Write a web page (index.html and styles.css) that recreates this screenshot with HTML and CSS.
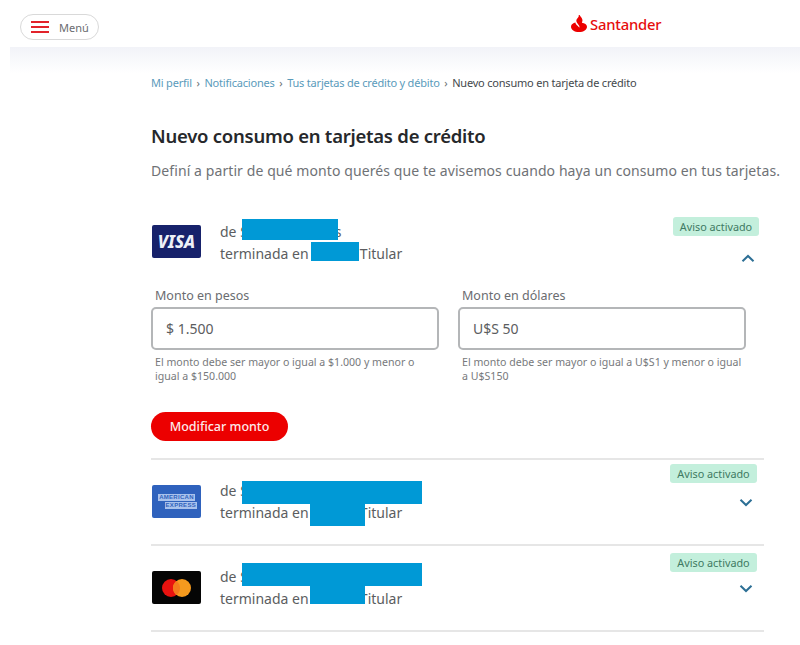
FILE: index.html
```html
<!DOCTYPE html>
<html lang="es">
<head>
    <meta charset="UTF-8">
    <meta name="viewport" content="width=device-width, initial-scale=1.0">
    <title>Santander - Nuevo consumo en tarjetas de crédito</title>
    <link rel="stylesheet" href="styles.css">
</head>
<body>
    <header class="topbar">
        <button class="menu-btn" type="button">
            <span class="menu-icon"><i></i><i></i><i></i></span>
            <span>Menú</span>
        </button>
        <div class="logo">
            <svg class="logo-flame" width="16" height="17" viewBox="0 0 16 17">
                <path fill="#ec0000" d="M8.600 0c.9 1.600 2.500 2.900 2.800 4.800 .2 1.200-.2 2.100-.5 2.900 2.800 .5 5.100 1.800 5.100 4 0 2.900-3.400 5.300-8 5.300s-8-2.400-8-5.300c0-2.200 2.200-3.500 4.500-4.100-.1 1 .6 1.900 1.400 2.700 .9 .8 1.900 1.500 2.400 2.500 .6-1.500-.4-2.700-1.400-3.900-1-1.100-1.900-2.200-1.500-3.800 .3-1.100 1.400-2 2-3 .4-.7 .6-1.300 .2-2.100z"/>
            </svg>
            <span>Santander</span>
        </div>
    </header>
    <div class="band"></div>

    <main class="content">
        <nav class="crumbs">
            <a>Mi perfil</a> <b>›</b> <a>Notificaciones</a> <b>›</b> <a>Tus tarjetas de crédito y débito</a> <b>›</b> <span>Nuevo consumo en tarjeta de crédito</span>
        </nav>

        <h1>Nuevo consumo en tarjetas de crédito</h1>
        <p class="intro">Definí a partir de qué monto querés que te avisemos cuando haya un consumo en tus tarjetas.</p>

        <section class="card-row card-open">
            <div class="card-head">
                <div class="brand brand-visa">VISA</div>
                <div class="card-info">
                    <div>de S<span class="holder"></span>s</div>
                    <div>terminada en <span class="digits"></span> Titular</div>
                    <span class="redact redact-visa-a"></span>
                    <span class="redact redact-visa-b"></span>
                </div>
                <div class="card-status">
                    <span class="badge">Aviso activado</span>
                    <svg class="chevron" width="14" height="9" viewBox="0 0 14 9"><path d="M1.500 7.300 7 2l5.500 5.300"/></svg>
                </div>
            </div>

            <div class="fields">
                <div class="field">
                    <label for="pesos">Monto en pesos</label>
                    <input id="pesos" type="text" value="$ 1.500">
                    <p>El monto debe ser mayor o igual a $1.000 y menor o igual a $150.000</p>
                </div>
                <div class="field">
                    <label for="dolares">Monto en dólares</label>
                    <input id="dolares" type="text" value="U$S 50">
                    <p>El monto debe ser mayor o igual a U$S1 y menor o igual a U$S150</p>
                </div>
            </div>

            <button class="primary" type="button">Modificar monto</button>
        </section>

        <section class="card-row">
            <div class="card-head">
                <div class="brand brand-amex"><span>AMERICAN</span><span>EXPRESS</span></div>
                <div class="card-info">
                    <div>de S</div>
                    <div>terminada en <span class="digits"></span> Titular</div>
                    <span class="redact redact-amex-a"></span>
                    <span class="redact redact-amex-b"></span>
                </div>
                <div class="card-status">
                    <span class="badge">Aviso activado</span>
                    <svg class="chevron" width="14" height="9" viewBox="0 0 14 9"><path d="M1.500 1.700 7 7l5.500-5.300"/></svg>
                </div>
            </div>
        </section>

        <section class="card-row card-last">
            <div class="card-head">
                <div class="brand brand-mc">
                    <svg width="29" height="18" viewBox="0 0 29 18">
                        <circle cx="9" cy="9" r="9" fill="#e8120f"/>
                        <circle cx="20" cy="9" r="9" fill="#f59a1e"/>
                        <path fill="#f47a1c" d="M14.500 1.880A9 9 0 0 1 14.500 16.120 9 9 0 0 1 14.500 1.880z"/>
                    </svg>
                </div>
                <div class="card-info">
                    <div>de S</div>
                    <div>terminada en <span class="digits"></span> Titular</div>
                    <span class="redact redact-mc-a"></span>
                    <span class="redact redact-mc-b"></span>
                </div>
                <div class="card-status">
                    <span class="badge">Aviso activado</span>
                    <svg class="chevron" width="14" height="9" viewBox="0 0 14 9"><path d="M1.500 1.700 7 7l5.500-5.300"/></svg>
                </div>
            </div>
        </section>
    </main>
</body>
</html>
```

FILE: styles.css
```css
* {
    margin: 0;
    padding: 0;
    box-sizing: border-box;
}

body {
    font-family: "Noto Sans", "Open Sans", sans-serif;
    background: #fff;
    color: #5f6266;
    overflow: hidden;
}

.topbar {
    height: 47px;
    padding: 14px 0 0 20px;
    display: flex;
    align-items: flex-start;
}

.menu-btn {
    width: 79px;
    height: 26px;
    display: flex;
    align-items: center;
    gap: 10px;
    padding-left: 10px;
    background: #fff;
    border: 1px solid #d9d9d9;
    border-radius: 13px;
    font-family: inherit;
    font-size: 11px;
    color: #6a6c70;
}

.menu-icon {
    display: flex;
    flex-direction: column;
    gap: 3px;
}

.menu-icon i {
    display: block;
    width: 18px;
    height: 2px;
    background: #e2232b;
}

.logo {
    display: flex;
    align-items: center;
    gap: 3px;
    margin: -1px 0 0 472px;
    font-size: 14.800px;
    line-height: 22px;
    font-weight: 500;
    color: #e60d0d;
    letter-spacing: -0.2px;
}

.logo-flame {
    margin-top: -2px;
}

.band {
    height: 26px;
    margin-left: 10px;
    background: linear-gradient(#f2f3f8, #fff);
}

.content {
    width: 613px;
    margin-left: 151px;
}

.crumbs {
    margin-top: 2px;
    font-size: 11px;
    line-height: 15px;
    white-space: nowrap;
    color: #44484c;
    letter-spacing: -0.2px;
}

.crumbs a {
    color: #5a9bbb;
}

.crumbs b {
    margin: 0 2px;
    font-weight: 400;
    color: #6a7074;
}

h1 {
    margin-top: 33px;
    font-size: 18.500px;
    line-height: 26px;
    font-weight: 600;
    color: #26282b;
    white-space: nowrap;
    letter-spacing: -0.25px;
}

.intro {
    margin-top: 12px;
    font-size: 14px;
    line-height: 20px;
    color: #6f7276;
    white-space: nowrap;
    letter-spacing: 0.09px;
}

.card-row {
    border-bottom: 2px solid #e6e6e6;
    height: 86px;
    padding-top: 3px;
}

.card-open {
    height: 261px;
    margin-top: 18px;
    padding-top: 0;
}

.card-open .card-head {
    padding-top: 6px;
}

.card-head {
    display: flex;
    align-items: flex-start;
}

.brand {
    flex: none;
    width: 49px;
    height: 33px;
    margin: 22px 19px 0 1px;
    border-radius: 2px;
    display: flex;
    flex-direction: column;
    align-items: center;
    justify-content: center;
}

.card-open .brand {
    margin-top: 20px;
}

.brand-visa {
    background: #17226b;
    color: #eef1f8;
    font-size: 17px;
    font-weight: 800;
    font-style: italic;
}

.brand-amex {
    background: #2f62bd;
    color: #2f62bd;
    gap: 1px;
    font-size: 6px;
    line-height: 7px;
    font-family: "Liberation Sans", sans-serif;
    font-weight: 700;
    letter-spacing: 0.3px;
}

.brand-amex span {
    padding: 0 1px;
    background: #a9c2ec;
}

.brand-amex span:last-child {
    align-self: flex-end;
    margin-right: 4px;
}

.brand-mc {
    background: #050505;
}

.card-info {
    flex: none;
    width: 260px;
    margin-top: 17px;
    position: relative;
    font-size: 14px;
    line-height: 22px;
    color: #5b5d60;
    white-space: nowrap;
}

.card-open .card-info {
    margin-top: 16px;
}

.holder {
    display: inline-block;
    width: 87px;
}

.digits {
    display: inline-block;
    width: 44px;
}

/* bars that hide the holder name and card digits */
.redact {
    position: absolute;
    background: #0099d6;
}

.redact-visa-a {
    left: 22px;
    top: -2px;
    width: 96px;
    height: 21px;
}

.redact-visa-b {
    left: 91px;
    top: 21px;
    width: 48px;
    height: 19px;
}

.redact-amex-a {
    left: 22px;
    top: 1px;
    width: 180px;
    height: 23px;
}

.redact-amex-b {
    left: 90px;
    top: 24px;
    width: 55px;
    height: 22px;
}

.redact-mc-a {
    left: 22px;
    top: -3px;
    width: 180px;
    height: 23px;
}

.redact-mc-b {
    left: 90px;
    top: 20px;
    width: 55px;
    height: 18px;
}

.card-status {
    margin-left: auto;
    margin-right: 7px;
    margin-top: 1px;
    display: flex;
    flex-direction: column;
    align-items: flex-end;
    gap: 15px;
}

.card-open .card-status {
    margin-right: 5px;
    margin-top: 12px;
    gap: 18px;
}

.card-last .card-status {
    margin-top: 4px;
    gap: 12px;
}

.badge {
    height: 19px;
    width: 87px;
    border-radius: 3px;
    background: #c3efdc;
    color: #3f7a63;
    font-size: 10.800px;
    line-height: 19px;
    text-align: center;
    white-space: nowrap;
}

.card-open .badge {
    width: 86px;
}

.chevron {
    margin-right: 4px;
}

.chevron path {
    fill: none;
    stroke: #2c6f95;
    stroke-width: 2;
}

.fields {
    display: flex;
    gap: 19px;
    margin-top: 22px;
}

.field {
    width: 288px;
}

.field label {
    display: block;
    padding-left: 4px;
    font-size: 12.500px;
    line-height: 18px;
    color: #6a6c70;
}

.field input {
    display: block;
    width: 100%;
    height: 43px;
    margin-top: 2px;
    padding-left: 13px;
    border: 2px solid #b4b6b8;
    border-radius: 5px;
    background: #fff;
    font-family: inherit;
    font-size: 14px;
    color: #5b5d60;
}

.field p {
    margin-top: 5px;
    padding-left: 4px;
    font-size: 10.600px;
    line-height: 14px;
    color: #77797c;
}

.primary {
    display: block;
    width: 137px;
    height: 29px;
    margin-top: 29px;
    border: none;
    border-radius: 15px;
    background: #ec0000;
    color: #fdeaea;
    font-family: inherit;
    font-size: 12.500px;
    font-weight: 500;
}
```
